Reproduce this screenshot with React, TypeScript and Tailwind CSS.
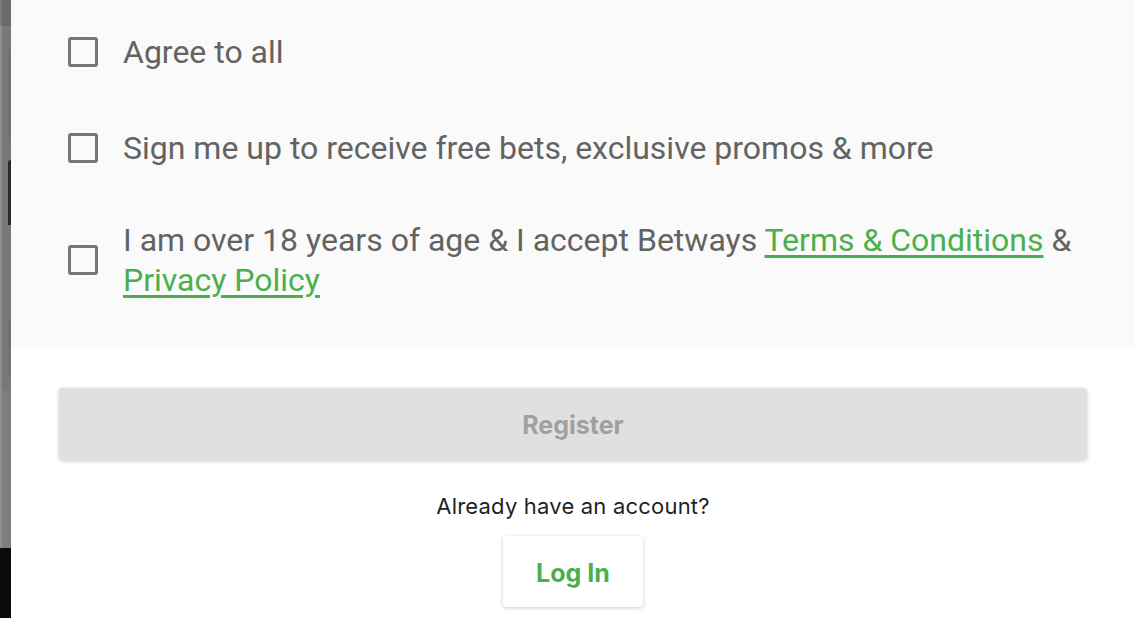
import React from "react";

const Box = () => (
  <div className="shrink-0 w-[30px] h-[30px] border-[3px] border-[#767676] rounded-[3px]" />
);

export default function App() {
  return (
    <div className="flex w-[1134px] h-[618px] overflow-hidden bg-white" style={{ fontFamily: "Roboto, 'Liberation Sans', sans-serif" }}>
      {/* backdrop strip */}
      <div className="flex w-[11px] shrink-0">
        <div className="flex flex-col w-[2px]">
          <div className="h-[26px] bg-[#7a7a7a]" />
          <div className="h-[522px] bg-[#8e8e8e]" />
          <div className="flex-1 bg-[#0b0b0b]" />
        </div>
        <div className="flex flex-col w-[9px]">
          <div className="h-[26px] bg-[#6b6b6b]" />
          <div className="flex h-[364px] bg-[#787878]">
            <div className="w-[6px]" />
            <div className="flex flex-col w-[3px]">
              <div className="h-[22px]" />
              <div className="h-[95px] bg-[#727272] rounded-tl-[3px] rounded-bl-[3px]" />
              <div className="h-[17px]" />
              <div className="h-[65px] bg-[#2a2a2a] rounded-tl-[3px]" />
              <div className="h-[93px]" />
              <div className="h-[58px] bg-[#727272] rounded-tl-[3px] rounded-bl-[3px]" />
            </div>
          </div>
          <div className="h-[158px] bg-[#7d7d7d]" />
          <div className="flex-1 bg-[#0b0b0b]" />
        </div>
      </div>

      {/* dialog content */}
      <div className="flex-1 flex flex-col">
        <div className="bg-[#fafafa] h-[347px] pl-[57px] pr-[40px] pt-[32px] text-[32px] leading-[40px] text-[#636363]">
          <div className="flex items-center gap-[25px] h-[40px]">
            <Box />
            <span>Agree to all</span>
          </div>
          <div className="flex items-center gap-[25px] h-[40px] mt-[56px]">
            <Box />
            <span>Sign me up to receive free bets, exclusive promos &amp; more</span>
          </div>
          <div className="flex items-center gap-[25px] mt-[52px]">
            <Box />
            <span>
              I am over 18 years of age &amp; I accept Betways{" "}
              <a className="text-[#4caf4f] underline underline-offset-[4px] decoration-[3px]">Terms &amp; Conditions</a>{" "}
              &amp;{" "}
              <a className="text-[#4caf4f] underline underline-offset-[4px] decoration-[3px]">Privacy Policy</a>
            </span>
          </div>
        </div>

        <div className="flex flex-col items-center pt-[41px] pl-[48px] pr-[47px]">
          <button className="w-full h-[72px] rounded-[4px] bg-[#e0e0e0] shadow-[0_1px_4px_rgba(0,0,0,0.2)] text-[25px] font-bold text-[#a0a0a0] pt-[4px]" style={{ fontFamily: "Inter, sans-serif" }}>
            Register
          </button>
          <div className="mt-[32px] text-[22px] leading-[28px] text-[#1f1f1f] tracking-[0.2px]" style={{ fontFamily: "Inter, sans-serif" }}>
            Already have an account?
          </div>
          <button className="mt-[16px] w-[140px] h-[71px] rounded-[4px] bg-white shadow-[0_1px_4px_rgba(0,0,0,0.2)] text-[25px] font-bold text-[#4caf4f] pt-[4px]" style={{ fontFamily: "Inter, sans-serif" }}>
            Log In
          </button>
        </div>
      </div>
    </div>
  );
}
